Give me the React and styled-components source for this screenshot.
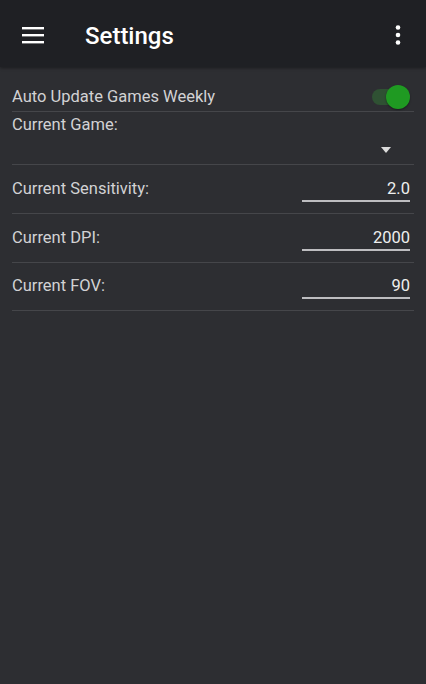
import React from "react";
import styled, { createGlobalStyle } from "styled-components";

const Global = createGlobalStyle`
  html, body { margin: 0; padding: 0; height: 100%; }
  body { background: #2d2e32; font-family: Roboto, "Noto Sans", Arial, sans-serif; }
  #root { min-height: 100%; }
`;

const Page = styled.div`
  width: 426px;
  height: 684px;
  background: #2d2e32;
  display: flex;
  flex-direction: column;
`;

const AppBar = styled.header`
  height: 67px;
  background: #1f2024;
  display: flex;
  align-items: center;
  padding: 2px 16px 0 22px;
  box-sizing: border-box;
  box-shadow: 0 1px 3px rgba(0, 0, 0, 0.4);
`;

const IconButton = styled.button`
  background: none;
  border: 0;
  padding: 0;
  margin: 0;
  margin-top: ${(p) => p.$mt || 0}px;
  display: flex;
  align-items: center;
  justify-content: center;
  color: #fff;
  width: ${(p) => p.$w}px;
  height: 24px;
`;

const Title = styled.h1`
  margin: 2px 0 0 41px;
  flex: 1;
  color: #ffffff;
  font-size: 24px;
  font-weight: 500;
  line-height: 28px;
  letter-spacing: 0;
`;

const List = styled.div`
  padding: 16px 12px 0 12px;
  display: flex;
  flex-direction: column;
`;

const Row = styled.div`
  display: flex;
  align-items: ${(p) => (p.$center ? "center" : "flex-start")};
  justify-content: space-between;
  height: ${(p) => p.$h}px;
  padding-top: ${(p) => p.$pt || 0}px;
  padding-right: 4px;
  box-sizing: border-box;
  border-bottom: 1px solid #45464a;
`;

const GameRow = styled.div`
  display: flex;
  flex-direction: column;
  height: 53px;
  padding-top: 3px;
  box-sizing: border-box;
  border-bottom: 1px solid #45464a;
`;

const Label = styled.span`
  color: #d2d2d4;
  font-size: 16.5px;
  line-height: 20px;
`;

const Select = styled.div`
  display: flex;
  align-items: center;
  justify-content: flex-end;
  height: 26px;
  padding-right: 23px;
`;

const Caret = styled.span`
  width: 0;
  height: 0;
  border-left: 5px solid transparent;
  border-right: 5px solid transparent;
  border-top: 6px solid #dcdcdc;
  margin-top: 4px;
`;

const Field = styled.div`
  width: 108px;
  text-align: right;
  color: #eeeeee;
  font-size: 16.5px;
  line-height: 20px;
  padding-bottom: 1px;
  border-bottom: 2px solid #bdbdc0;
`;

const Switch = styled.div`
  position: relative;
  width: 38px;
  height: 26px;
`;

const Track = styled.div`
  position: absolute;
  left: 0;
  top: 5px;
  width: 36px;
  height: 16px;
  border-radius: 8px;
  background: #2f5133;
`;

const Thumb = styled.div`
  position: absolute;
  right: 0;
  top: 1px;
  width: 24px;
  height: 24px;
  border-radius: 50%;
  background: #1f9a22;
  box-shadow: 0 1px 2px rgba(0, 0, 0, 0.4);
`;

export default function App() {
  return (
    <Page>
      <Global />
      <AppBar>
        <IconButton $w={22} aria-label="menu">
          <svg width="22" height="18" viewBox="0 0 22 18">
            <rect x="0" y="1" width="22" height="2.4" fill="#fff" />
            <rect x="0" y="8" width="22" height="2.4" fill="#fff" />
            <rect x="0" y="15" width="22" height="2.4" fill="#fff" />
          </svg>
        </IconButton>
        <Title>Settings</Title>
        <IconButton $w={24} $mt={1} aria-label="more">
          <svg width="6" height="20" viewBox="0 0 6 20">
            <circle cx="3" cy="2.5" r="2.3" fill="#fff" />
            <circle cx="3" cy="10" r="2.3" fill="#fff" />
            <circle cx="3" cy="17.5" r="2.3" fill="#fff" />
          </svg>
        </IconButton>
      </AppBar>
      <List>
        <Row $h={29} $center>
          <Label>Auto Update Games Weekly</Label>
          <Switch>
            <Track />
            <Thumb />
          </Switch>
        </Row>
        <GameRow>
          <Label>Current Game:</Label>
          <Select>
            <Caret />
          </Select>
        </GameRow>
        <Row $h={49} $pt={14}>
          <Label>Current Sensitivity:</Label>
          <Field>2.0</Field>
        </Row>
        <Row $h={49} $pt={14}>
          <Label>Current DPI:</Label>
          <Field>2000</Field>
        </Row>
        <Row $h={48} $pt={13}>
          <Label>Current FOV:</Label>
          <Field>90</Field>
        </Row>
      </List>
    </Page>
  );
}
